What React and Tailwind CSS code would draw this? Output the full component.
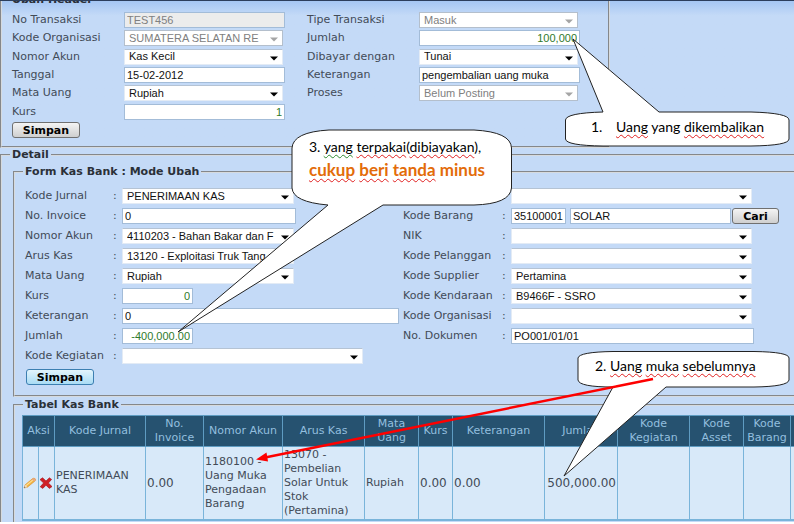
import { clsx } from "clsx";

const UI = "font-['DejaVu_Sans',Verdana,sans-serif]";
const FIELD = "font-['Liberation_Sans',Arial,sans-serif]";

function TextBox({ id, value, className, number, readOnly }) {
  return (
    <input
      id={id}
      type="text"
      defaultValue={value}
      readOnly={readOnly}
      className={clsx(
        FIELD,
        "block h-4 border border-[#a3bcd8] px-[2px] text-[11px] leading-[14px] outline-none",
        number ? "text-right text-[#2f7a2a]" : "text-left",
        !number && (readOnly ? "text-[#808080]" : "text-[#111]"),
        readOnly ? "bg-[#ececec]" : "bg-white",
        className
      )}
    />
  );
}

function DropDown({ id, value = "", className, disabled, label }) {
  return (
    <span className={clsx("relative block h-4", className)}>
      <select
        id={id}
        aria-label={label}
        disabled={disabled}
        defaultValue={value}
        className={clsx(
          FIELD,
          "block h-4 w-full appearance-none border bg-white pr-4 pl-1 text-[11px] leading-[13px] opacity-100 outline-none",
          disabled ? "border-[#b4bfcc] text-[#808080]" : "border-[#e3ebf5] border-t-[#b5c3d4] text-[#111]"
        )}
      >
        <option value={value}>{value}</option>
      </select>
      <svg
        viewBox="0 0 8 5"
        className={clsx("pointer-events-none absolute top-[7px] right-[5px] h-[5px] w-2", disabled ? "fill-[#a5a5a5]" : "fill-black")}
        aria-hidden="true"
      >
        <path d="M0 0.5H8L4 4.5Z" />
      </svg>
    </span>
  );
}

function PushButton({ children, className, active }) {
  return (
    <button
      type="button"
      className={clsx(
        "flex h-4 items-end justify-center rounded-[3px] border bg-linear-to-b text-[11px] leading-[13px] font-bold text-black",
        active ? "border-[#3c7fb1] from-[#e3f4fc] to-[#a9dcf5]" : "border-[#707070] from-[#f4f4f4] to-[#cfcfcf]",
        className
      )}
    >
      {children}
    </button>
  );
}

function HeaderRow({ id, label, children }) {
  return (
    <div className="flex items-center">
      <label htmlFor={id} className="w-28 shrink-0 whitespace-nowrap">
        {label}
      </label>
      {children}
    </div>
  );
}

function DetailRow({ id, label, wide, children }) {
  return (
    <div className="flex h-5 items-center">
      <label htmlFor={id} className={clsx("shrink-0 whitespace-nowrap", wide ? "w-[99px]" : "w-[88px]")}>
        {label}
      </label>
      <span className="w-[9px] shrink-0">{label ? ":" : ""}</span>
      {children}
    </div>
  );
}

function Panel({ title, className, bodyClass, children }) {
  return (
    <fieldset className={clsx("min-w-0 border-2 border-r-0 border-[#d6dade] [border-style:groove]", className)}>
      <legend className="ml-2 px-[2px] text-[11px] leading-[14px] font-bold text-[#2b3038]">{title}</legend>
      <div className={bodyClass}>{children}</div>
    </fieldset>
  );
}

const COLUMNS = [
  { title: "Kode Jurnal", width: "w-[91px]", value: "PENERIMAAN KAS" },
  { title: "No. Invoice", width: "w-[58px]", value: "0.00", number: true },
  { title: "Nomor Akun", width: "w-[79px]", value: "1180100 - Uang Muka Pengadaan Barang" },
  { title: "Arus Kas", width: "w-[82px]", value: "13070 - Pembelian Solar Untuk Stok (Pertamina)" },
  { title: "Mata Uang", width: "w-[54px]", value: "Rupiah" },
  { title: "Kurs", width: "w-[34px]", value: "0.00", number: true },
  { title: "Keterangan", width: "w-[92px]", value: "0.00", number: true },
  { title: "Jumlah", width: "w-[73px]", value: "500,000.00", number: true, right: true },
  { title: "Kode Kegiatan", width: "w-[72px]", value: "" },
  { title: "Kode Asset", width: "w-[54px]", value: "" },
  { title: "Kode Barang", width: "w-[47px]", value: "" },
  { title: "", width: "w-10", value: "" },
];

function Pencil() {
  return (
    <svg viewBox="0 0 14 12" className="h-3 w-[14px]" aria-hidden="true">
      <path d="M1 11L2.2 7.8L9.6 1.6Q11 0.6 12.2 1.8Q13 3 12 4L4.4 10.2Z" fill="#f2b544" stroke="#d88d2a" strokeWidth="0.6" />
      <path d="M3 8.6L10.6 2.4" stroke="#ffe19a" strokeWidth="1.2" />
      <path d="M9.6 1.6Q11 0.6 12.2 1.8Q13 3 12 4L11.2 4.6L8.8 2.2Z" fill="#e9a77f" />
      <path d="M1 11L2.2 7.8L4.4 10.2Z" fill="#f3dcc0" />
      <path d="M1 11L1.5 9.6L2.5 10.6Z" fill="#555" />
    </svg>
  );
}

function Cross() {
  return (
    <svg viewBox="0 0 14 12" className="h-3 w-[14px]" aria-hidden="true">
      <path d="M1 2.6L3.6 0.8L7 4L10.4 0.8L12.6 2.4L9.4 6L13 9.6L10.4 11.4L7 8.2L3.8 11.4L1.2 9.8L4.6 6Z" fill="#cf1f26" stroke="#a30f16" strokeWidth="0.6" />
    </svg>
  );
}

function Spell({ children, grammar }) {
  return (
    <span className={clsx("underline decoration-wavy decoration-1 underline-offset-2 [text-decoration-skip-ink:none]", grammar ? "decoration-[#2e8b2e]" : "decoration-[#e02020]")}>
      {children}
    </span>
  );
}

function Callouts() {
  const text = "absolute font-['Lato',Calibri,sans-serif] whitespace-nowrap text-black text-[14px] leading-[18px]";
  return (
    <div className="pointer-events-none absolute top-0 left-0 h-[524px] w-[794px]">
      <svg viewBox="0 0 794 524" className="absolute inset-0 h-full w-full" aria-hidden="true">
        <g fill="#fff" stroke="#222" strokeWidth="1">
          <path d="M603 112L573 39L659 112H751Q789 113 789 120V139Q789 145.500 751 146H603Q566 145.500 565.500 139V120Q566 113 603 112Z" />
          <path d="M329 130H474Q511 132 511.500 148V188Q510 204 474 205H383L178 332L328 205Q293 202 292 188V148Q293 132 329 130Z" />
          <path d="M613 351.500H754Q789 352 789 358V380Q788 386.500 754 387H666L564 476L613 387Q579 387 578 380V358Q579 352 613 351.500Z" />
        </g>
        <path d="M653 379L265 457.500" stroke="#fe0000" strokeWidth="2.500" fill="none" />
        <path d="M256 459.500L266.500 452.500L268 461.500Z" fill="#fe0000" />
      </svg>
      <p className={clsx(text, "top-[118px] left-[591px] flex")}>
        <span className="w-[25px]">1.</span>
        <span>
          <Spell>Uang</Spell> yang <Spell>dikembalikan</Spell>
        </span>
      </p>
      <div className={clsx(text, "top-[138px] left-[309px]")}>
        <p>
          3. <Spell grammar>yang</Spell> <Spell>terpakai</Spell>(<Spell>dibiayakan</Spell>),
        </p>
        <p className="mt-[2px] text-[17px] leading-[24px] font-bold text-[#e36c0a]">
          <Spell>cukup</Spell> <Spell>beri</Spell> <Spell>tanda</Spell> minus
        </p>
      </div>
      <p className={clsx(text, "top-[357px] left-[595px]")}>
        2. <Spell>Uang</Spell> <Spell>muka</Spell> <Spell>sebelumnya</Spell>
      </p>
    </div>
  );
}

export default function App() {
  return (
    <div className={clsx(UI, "relative min-h-screen overflow-hidden bg-white text-[11px] leading-[14px] text-[#424b57]")}>
      <main className="bg-[#c4daf7]">
        <div className="border-t border-[#2c3e5c] bg-linear-to-b from-[#a5c6f3] to-[#c4daf7] to-10%">
          <section className="h-[147px] w-[610px] border-2 border-t-0 border-[#d6dade] pl-[10px] [border-style:groove]">
            <h2 className="mb-[3px] flex h-[7px] items-end overflow-hidden text-[11px] leading-4 font-bold text-[#2b3038]">Ubah Header</h2>
            <div className="flex">
              <div className="grid h-[110px] w-[295px] grid-rows-6">
                <HeaderRow id="no" label="No Transaksi">
                  <TextBox id="no" value="TEST456" readOnly className="w-[161px]" />
                </HeaderRow>
                <HeaderRow id="org" label="Kode Organisasi">
                  <DropDown id="org" value="SUMATERA SELATAN RE" disabled className="w-[159px]" />
                </HeaderRow>
                <HeaderRow id="akun" label="Nomor Akun">
                  <DropDown id="akun" value="Kas Kecil" className="w-[159px]" />
                </HeaderRow>
                <HeaderRow id="tgl" label="Tanggal">
                  <TextBox id="tgl" value="15-02-2012" className="w-[161px]" />
                </HeaderRow>
                <HeaderRow id="mu" label="Mata Uang">
                  <DropDown id="mu" value="Rupiah" className="w-[159px]" />
                </HeaderRow>
                <HeaderRow id="kurs" label="Kurs">
                  <TextBox id="kurs" value="1" number className="w-[161px]" />
                </HeaderRow>
              </div>
              <div className="grid h-[110px] grid-rows-6">
                <HeaderRow id="tipe" label="Tipe Transaksi">
                  <DropDown id="tipe" value="Masuk" disabled className="w-[159px]" />
                </HeaderRow>
                <HeaderRow id="jml" label="Jumlah">
                  <TextBox id="jml" value="100,000" number className="w-[161px]" />
                </HeaderRow>
                <HeaderRow id="bayar" label="Dibayar dengan">
                  <DropDown id="bayar" value="Tunai" className="w-[159px]" />
                </HeaderRow>
                <HeaderRow id="ket" label="Keterangan">
                  <TextBox id="ket" value="pengembalian uang muka" className="w-[161px]" />
                </HeaderRow>
                <HeaderRow id="proses" label="Proses">
                  <DropDown id="proses" value="Belum Posting" disabled className="w-[159px]" />
                </HeaderRow>
              </div>
            </div>
            <PushButton className="mt-px w-[68px]">Simpan</PushButton>
          </section>
        </div>

        <Panel title="Detail" className="border-b-0" bodyClass="pl-[11px]">
          <Panel title="Form Kas Bank : Mode Ubah" className="mt-[3px]" bodyClass="pt-[7px] pb-[10px] pl-[10px]">
            <div className="flex">
              <div className="w-[378px] shrink-0">
                <DetailRow id="d-jurnal" label="Kode Jurnal">
                  <DropDown id="d-jurnal" value="PENERIMAAN KAS" className="w-[172px]" />
                </DetailRow>
                <DetailRow id="d-inv" label="No. Invoice">
                  <TextBox id="d-inv" value="0" className="w-[174px]" />
                </DetailRow>
                <DetailRow id="d-akun" label="Nomor Akun">
                  <DropDown id="d-akun" value="4110203 - Bahan Bakar dan F" className="w-[172px]" />
                </DetailRow>
                <DetailRow id="d-arus" label="Arus Kas">
                  <DropDown id="d-arus" value="13120 - Exploitasi Truk Tang" className="w-[172px]" />
                </DetailRow>
                <DetailRow id="d-mu" label="Mata Uang">
                  <DropDown id="d-mu" value="Rupiah" className="w-[172px]" />
                </DetailRow>
                <DetailRow id="d-kurs" label="Kurs">
                  <TextBox id="d-kurs" value="0" number className="w-[71px]" />
                </DetailRow>
                <DetailRow id="d-ket" label="Keterangan">
                  <TextBox id="d-ket" value="0" className="w-[277px]" />
                </DetailRow>
                <DetailRow id="d-jml" label="Jumlah">
                  <TextBox id="d-jml" value="-400,000.00" number className="w-[71px]" />
                </DetailRow>
                <DetailRow id="d-keg" label="Kode Kegiatan">
                  <DropDown id="d-keg" className="w-[241px]" />
                </DetailRow>
              </div>
              <div className="shrink-0">
                <DetailRow wide>
                  <DropDown label="Kode Asset" className="w-[241px]" />
                </DetailRow>
                <DetailRow id="d-brg" label="Kode Barang" wide>
                  <div className="flex items-center">
                    <TextBox id="d-brg" value="35100001" className="w-[55px]" />
                    <label className="ml-1">
                      <TextBox value="SOLAR" className="w-[161px]" />
                    </label>
                    <PushButton className="ml-px w-[47px]">Cari</PushButton>
                  </div>
                </DetailRow>
                <DetailRow id="d-nik" label="NIK" wide>
                  <DropDown id="d-nik" className="w-[241px]" />
                </DetailRow>
                <DetailRow id="d-plg" label="Kode Pelanggan" wide>
                  <DropDown id="d-plg" className="w-[241px]" />
                </DetailRow>
                <DetailRow id="d-sup" label="Kode Supplier" wide>
                  <DropDown id="d-sup" value="Pertamina" className="w-[241px]" />
                </DetailRow>
                <DetailRow id="d-ken" label="Kode Kendaraan" wide>
                  <DropDown id="d-ken" value="B9466F - SSRO" className="w-[241px]" />
                </DetailRow>
                <DetailRow id="d-org" label="Kode Organisasi" wide>
                  <DropDown id="d-org" className="w-[241px]" />
                </DetailRow>
                <DetailRow id="d-dok" label="No. Dokumen" wide>
                  <TextBox id="d-dok" value="PO001/01/01" className="w-[243px]" />
                </DetailRow>
              </div>
            </div>
            <PushButton active className="mt-[3px] ml-px w-[68px]">
              Simpan
            </PushButton>
          </Panel>

          <Panel title="Tabel Kas Bank" className="mt-px border-b-0" bodyClass="pt-[3px] pb-px pl-[7px]">
            <table className="w-[784px] table-fixed border-collapse border border-b-2 border-[#79b4da]">
              <colgroup>
                <col className="w-4" />
                <col className="w-4" />
                {COLUMNS.map((c, i) => (
                  <col key={i} className={c.width} />
                ))}
              </colgroup>
              <thead>
                <tr className="h-[31px] bg-[#265270] text-[#93bfdf]">
                  <th colSpan={2} className="border border-[#5f9cc2] p-0 font-normal">
                    Aksi
                  </th>
                  {COLUMNS.map((c, i) => (
                    <th key={i} className="border border-[#5f9cc2] p-0 font-normal">
                      {c.title}
                    </th>
                  ))}
                </tr>
              </thead>
              <tbody>
                <tr className="h-[73px] bg-[#d8e9f9]">
                  <td className="border border-[#79b4da] p-0">
                    <button type="button" aria-label="Ubah" className="block">
                      <Pencil />
                    </button>
                  </td>
                  <td className="border border-[#79b4da] p-0">
                    <button type="button" aria-label="Hapus" className="block">
                      <Cross />
                    </button>
                  </td>
                  {COLUMNS.map((c, i) => (
                    <td key={i} className={clsx("border border-[#79b4da] p-px", c.number && "text-[12px]", c.right && "text-right")}>
                      {c.value}
                    </td>
                  ))}
                </tr>
              </tbody>
            </table>
          </Panel>
        </Panel>
      </main>
      <Callouts />
    </div>
  );
}
